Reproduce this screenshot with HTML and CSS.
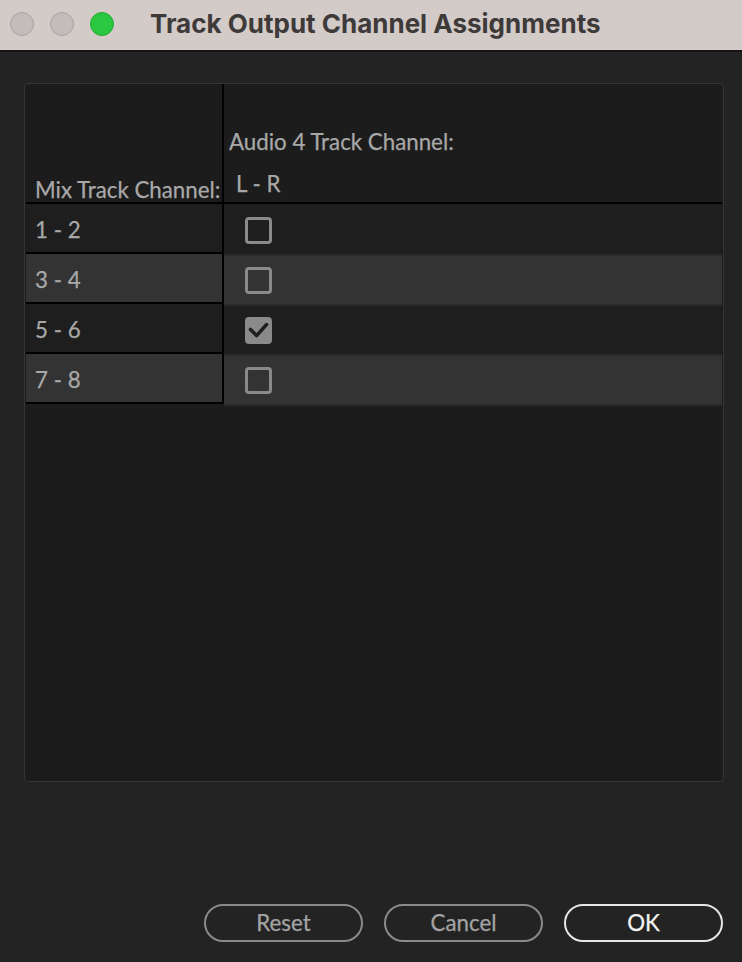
FILE: index.html
```html
<!DOCTYPE html>
<html>
<head>
<meta charset="utf-8">
<title>Track Output Channel Assignments</title>
<link rel="stylesheet" href="styles.css">
</head>
<body>
<div class="window">
  <div class="titlebar">
    <div class="lights">
      <span class="light gray"></span>
      <span class="light gray"></span>
      <span class="light green"></span>
    </div>
    <div class="title">Track Output Channel Assignments</div>
  </div>
  <div class="content">
    <div class="panel">
      <div class="grid-head">
        <div class="head-left"><span>Mix Track Channel:</span></div>
        <div class="head-right">
          <div class="head-track">Audio 4 Track Channel:</div>
          <div class="head-ch">L - R</div>
        </div>
      </div>
      <div class="grid-body">
        <div class="col-left">
          <div class="cell-left shade-a">1 - 2</div>
          <div class="cell-left shade-b">3 - 4</div>
          <div class="cell-left shade-a">5 - 6</div>
          <div class="cell-left shade-b">7 - 8</div>
        </div>
        <div class="col-right">
          <div class="cell-right shade-a first"><span class="check"></span></div>
          <div class="cell-right shade-b"><span class="check"></span></div>
          <div class="cell-right shade-a"><span class="check on"><svg viewBox="0 0 21 21" width="21" height="21"><path d="M2.5 9.5 L8.6 15.6 L18.5 4.6" fill="none" stroke="#1f1f1f" stroke-width="3.6" stroke-linecap="round" stroke-linejoin="round"/></svg></span></div>
          <div class="cell-right shade-b"><span class="check"></span></div>
        </div>
      </div>
    </div>
    <div class="buttons">
      <button class="btn">Reset</button>
      <button class="btn">Cancel</button>
      <button class="btn primary">OK</button>
    </div>
  </div>
</div>
</body>
</html>
```
FILE: styles.css
```css
* { box-sizing: border-box; }
html, body { margin: 0; padding: 0; }
body {
  width: 742px;
  height: 962px;
  overflow: hidden;
  background: #232323;
  font-family: "Lato", "Liberation Sans", sans-serif;
}
.window { width: 742px; height: 962px; }
.titlebar {
  height: 52px;
  background: #d3cbc8;
  border-bottom: 2px solid #141414;
  display: flex;
  align-items: center;
  padding-left: 10px;
}
.lights { display: flex; gap: 16px; margin-top: -2px; }
.light {
  width: 24px; height: 24px; border-radius: 50%;
  display: block;
}
.light.gray { background: #c2bdbc; border: 1px solid #aaa4a2; }
.light.green { background: #2ac840; border: 1px solid #20a834; }
.title {
  margin-left: 36px;
  margin-top: -4px;
  font-family: "Inter", "Liberation Sans", sans-serif;
  font-weight: 700;
  font-size: 26px;
  color: #3d3a39;
  white-space: nowrap;
}
.content {
  padding: 31px 18px 0 24px;
}
.panel {
  height: 699px;
  background: #1c1c1c;
  border: 1px solid #353535;
  border-radius: 4px;
  padding: 0 1px 0 1px;
}
.grid-head {
  display: flex;
  height: 120px;
  border-bottom: 2px solid #000;
}
.head-left {
  width: 198px;
  border-right: 2px solid #000;
  display: flex;
  align-items: flex-end;
  padding: 0 0 0 9px;
  color: #a8a8a8;
  font-size: 22.3px;
  white-space: nowrap;
  -webkit-text-stroke: 0.25px #a8a8a8;
}
.head-left span { line-height: 1; margin-bottom: 1px; }
.head-right {
  flex: 1;
  color: #a8a8a8;
  font-size: 22.3px;
  line-height: 1;
  padding-top: 47px;
  white-space: nowrap;
  -webkit-text-stroke: 0.25px #a8a8a8;
}
.head-track { padding-left: 5px; }
.head-ch { padding-left: 12px; margin-top: 20px; }
.grid-body { display: flex; }
.col-left { width: 198px; display: flex; flex-direction: column; }
.col-right { flex: 1; display: flex; flex-direction: column; }
.cell-left {
  height: 50px;
  border-right: 2px solid #000;
  border-bottom: 2px solid #000;
  color: #a8a8a8;
  font-size: 22.3px;
  display: flex;
  align-items: center;
  padding-left: 9px;
  padding-top: 2px;
  white-space: nowrap;
  -webkit-text-stroke: 0.25px #a8a8a8;
}
.cell-right {
  height: 50px;
  display: flex;
  align-items: center;
  padding-left: 21px;
  border-bottom: 2px solid #2a2a2a;
}
.cell-right.first { height: 52px; padding-top: 2px; }
.shade-a { background-color: #1e1e1e; }
.shade-b { background-color: #333333; }
.check {
  width: 27px; height: 27px;
  border: 3px solid #8a8a8a;
  border-radius: 4px;
  display: flex;
  align-items: center;
  justify-content: center;
}
.check.on { background: #8a8a8a; }
.check svg { display: block; }
.buttons {
  display: flex;
  justify-content: flex-end;
  gap: 21px;
  margin-top: 122px;
  padding-right: 1px;
}
.btn {
  width: 159px;
  height: 38px;
  border-radius: 19px;
  border: 2px solid #8a8a8a;
  background: transparent;
  color: #a3a3a3;
  font-family: "Lato", "Liberation Sans", sans-serif;
  font-size: 22.3px;
  padding: 0;
  line-height: 1;
  -webkit-text-stroke: 0.25px #a3a3a3;
}
.btn.primary { border-color: #e6e6e6; color: #f2f2f2; -webkit-text-stroke: 0.25px #f2f2f2; }
```
